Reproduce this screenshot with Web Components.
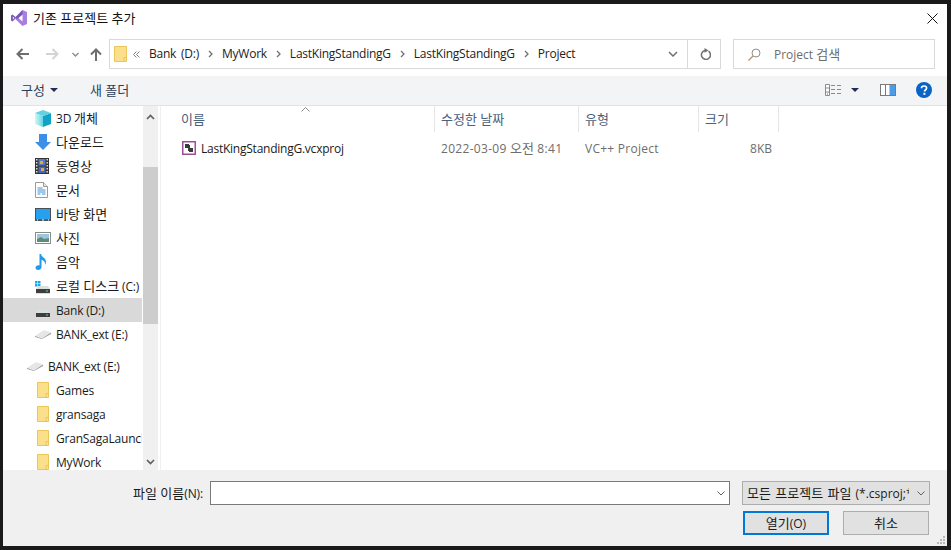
<!DOCTYPE html>
<html lang="ko">
<head>
<meta charset="utf-8">
<title>기존 프로젝트 추가</title>
<style>
html,body{margin:0;height:100%;overflow:hidden;background:#1a1a1a}
body{font:12px "Open Sans","Noto Sans CJK KR",sans-serif;color:#1a1a1a}
</style>
</head>
<body>
<file-dialog></file-dialog>
<script>
// hangul runs get a bigger size, the CJK font sets narrower than the original one
const ko = s => s.replace(/[가-힣]+( [가-힣]+)*/g, m => `<span style="font-size:13px;line-height:1;letter-spacing:0">${m}</span>`);
const folder = (w, h) => `<svg width="${w}" height="${h}" viewBox="0 0 ${w} ${h}"><path d="M.5.500h${w - 1}v${h - 1}H.5z" fill="#fcdf8a" stroke="#e8c65a"/><path d="M${w - 3} ${h - .5}v-4h2.500" fill="none" stroke="#e8c65a"/></svg>`;
const driveBody = `<path d="M3 8h10l2 3v5H1v-5z" fill="#dcdfe0"/><rect x="1" y="11" width="14" height="4" fill="#3e3e3e"/><rect x="11" y="12.500" width="2" height="1" fill="#5fe06a"/>`;
const ICONS = {
  folder: folder(12, 16),
  cube: `<svg width="16" height="17" viewBox="0 0 16 17"><defs><linearGradient id="c" x1="0" x2="1" y1="0" y2="0"><stop offset="0" stop-color="#d4f6f6"/><stop offset="1" stop-color="#62d6e0"/></linearGradient></defs><path d="M0 3l8 3v11l-8-3z" fill="url(#c)"/><path d="M8 6l8-3v11l-8 3z" fill="#12a2c8"/><path d="M8 0l8 3-8 3-8-3z" fill="#62d2e2"/></svg>`,
  download: `<svg width="16" height="16" viewBox="0 0 16 16"><path d="M4 0h8v8h4l-8 8-8-8h4z" fill="#3b8fe6"/></svg>`,
  video: `<svg width="14" height="16" viewBox="0 0 14 16"><rect width="14" height="16" fill="#333"/><path d="M1 1h1.500v1.500H1zm0 3h1.500v1.500H1zm0 3h1.500v1.500H1zm0 3h1.500v1.500H1zm0 3h1.500v1.500H1zm10.500-12H13v1.500h-1.500zm0 3H13v1.500h-1.500zm0 3H13v1.500h-1.500zm0 3H13v1.500h-1.500zm0 3H13v1.500h-1.500z" fill="#ddd"/><rect x="3.500" y="1" width="7" height="6.500" fill="#5a78c8"/><rect x="3.500" y="8.500" width="7" height="6.500" fill="#4a68b8"/><path d="M5 3h3v3H5zm1 7h3v3H6z" fill="#d8b040"/></svg>`,
  doc: `<svg width="13" height="16" viewBox="0 0 13 16"><path d="M.5.500h8l4 4v11H.5z" fill="#fff" stroke="#9a9a9a"/><path d="M8.500.500v4h4" fill="#e8e8e8" stroke="#9a9a9a"/><path d="M2.500 6h5M2.500 8h8M2.500 10h8M2.500 12h3M7 12h3.500" stroke="#3d8fd8"/></svg>`,
  desktop: `<svg width="16" height="13" viewBox="0 0 16 13"><rect width="16" height="13" fill="#4a4f55"/><rect x="1" y="1" width="14" height="10" fill="#27a0f0"/><path d="M1 11h14v1H1z" fill="#1d70c0"/><path d="M2 12h1M7 12h2M13 12h1" stroke="#fff"/></svg>`,
  photo: `<svg width="16" height="12" viewBox="0 0 16 12"><rect x=".5" y=".5" width="15" height="11" fill="#fff" stroke="#8a8a8a"/><rect x="2" y="2" width="12" height="8" fill="#9cc6dc"/><path d="M2 7l4-2 3 2 5-1v4H2z" fill="#5c8c78"/></svg>`,
  music: `<svg width="12" height="16" viewBox="0 0 12 16"><path d="M4.500 0H6c.3 3 5 3.500 5 8 0 1-.3 2-.8 2.800.2-3-2-4.500-3.700-5V13c0 1.700-1.500 3-3.300 3C1.700 16 .5 15 .5 13.700s1.500-2.400 3-2.400c.4 0 .7 0 1 .2z" fill="#1f9be8"/></svg>`,
  sysdrive: `<svg width="16" height="16" viewBox="0 0 16 16"><path d="M0 3h2.500v2.500H0zm3 0h2.500v2.500H3zM0 6h2.500v2.500H0zm3 0h2.500v2.500H3z" fill="#16a8f0"/>${driveBody}</svg>`,
  drive: `<svg width="16" height="16" viewBox="0 0 16 16">${driveBody}</svg>`,
  removable: `<svg width="16" height="9" viewBox="0 0 16 9"><path d="M0 6l9-6 7 2.500-9 6z" fill="#e6e6e6"/><path d="M0 6l7 2.500 9-6V4L7 9 0 7z" fill="#9a9a9a"/></svg>`,
  vcx: `<svg width="14" height="14" viewBox="0 0 14 14"><rect x=".75" y=".75" width="12.500" height="12.500" fill="#fff" stroke="#9b4f96" stroke-width="1.500"/><path d="M3 3h4v1h1v3h3v4H7v-1H6V7H3z" fill="#3a3a3a"/></svg>`,
  up: `<svg width="9" height="6" viewBox="0 0 9 6"><path d="M1 5l3.500-3.500L8 5" fill="none" stroke="#606060" stroke-width="1.700"/></svg>`,
  down: `<svg width="9" height="6" viewBox="0 0 9 6"><path d="M1 1l3.500 3.500L8 1" fill="none" stroke="#606060" stroke-width="1.700"/></svg>`,
  chev: `<svg width="8" height="5" viewBox="0 0 8 5"><path d="M.5.500L4 4 7.500.500" fill="none" stroke="#606060"/></svg>`
};

class FileDialog extends HTMLElement {
  connectedCallback() {
    this.attachShadow({ mode: 'open' });
    this.shadowRoot.innerHTML = `
      <style>
        :host{display:flex;flex-direction:column;box-sizing:border-box;width:944px;height:542px;margin:4px 4px 4px 3px;background:#fff;overflow:hidden}
        .main{display:flex;height:364px;flex:none}
      </style>
      <title-bar></title-bar>
      <nav-bar></nav-bar>
      <command-bar></command-bar>
      <div class="main">
        <nav-pane></nav-pane>
        <file-list></file-list>
      </div>
      <footer-bar></footer-bar>`;
  }
}

class TitleBar extends HTMLElement {
  connectedCallback() {
    this.attachShadow({ mode: 'open' });
    this.shadowRoot.innerHTML = `
      <style>
        :host{display:flex;align-items:center;height:29px;padding:0 9px 1px 8px;box-sizing:border-box;color:#111}
        svg.logo{margin-right:6px}
        span.t{flex:1}
      </style>
      <svg class="logo" width="16" height="16" viewBox="0 0 16 16"><path d="M0 5.500L1.500 4.500 5 7.500 4 9 1.500 11.500 0 10.500z" fill="#7a56b8"/><path d="M1.800 6.500L3.300 8 1.800 9.500z" fill="#fff"/><path d="M11.500 0L16 2v12l-4.500 2L4 8.800 5.500 7.500l6-7.500z" fill="#a77fe0"/><path d="M11.500 4.500L7.500 8l4 3.500z" fill="#fff"/><path d="M4 7.500L11.500 0v4.500L6 9z" fill="#7a56b8"/></svg>
      <span class="t">${ko('기존 프로젝트 추가')}</span>
      <svg width="11" height="11" viewBox="0 0 11 11"><path d="M.5.500l10 10M10.500.500l-10 10" stroke="#111" fill="none"/></svg>`;
  }
}

class NavBar extends HTMLElement {
  connectedCallback() {
    const crumbs = ['Bank (D:)', 'MyWork', 'LastKingStandingG', 'LastKingStandingG', 'Project'];
    const sep = `<svg class="sep" width="5" height="8" viewBox="0 0 5 8"><path d="M1 1l3 3-3 3" fill="none" stroke="#707070" stroke-width="1.300"/></svg>`;
    this.attachShadow({ mode: 'open' });
    this.shadowRoot.innerHTML = `
      <style>
        :host{display:flex;align-items:flex-start;height:43px;padding:6px 12px 0 0;box-sizing:border-box}
        .btns{display:flex;align-items:center;width:106px;height:30px;flex:none}
        .btns svg{flex:none}
        .addr{display:flex;align-items:center;width:612px;height:30px;box-sizing:border-box;border:1px solid #d9d9d9;flex:none;padding-left:4px}
        .path{flex:1;display:flex;align-items:center;min-width:0;white-space:nowrap;color:#222;letter-spacing:-.24px;word-spacing:2px}
        .path span{padding-bottom:1px}
        .path .sep{margin:0 9px}
        .drop{width:33px;height:28px;box-sizing:border-box;padding-left:4px;display:flex;align-items:center;justify-content:center;flex:none}
        .refresh{width:33px;height:28px;box-sizing:border-box;padding-left:2px;border-left:1px solid #d9d9d9;display:flex;align-items:center;justify-content:center;flex:none}
        .search{display:flex;align-items:center;width:202px;height:30px;margin-left:12px;box-sizing:border-box;border:1px solid #d9d9d9;padding-left:14px;color:#6d6d6d;flex:none}
        .search svg{margin-right:13px}
      </style>
      <div class="btns">
        <svg style="margin-left:13px" width="13" height="12" viewBox="0 0 13 12"><path d="M13 6H1.500M6.500 1l-5 5 5 5" fill="none" stroke="#6e6e6e" stroke-width="2"/></svg>
        <svg style="margin-left:17px" width="13" height="12" viewBox="0 0 13 12"><path d="M0 6h11.500M6.500 1l5 5-5 5" fill="none" stroke="#d4d4d4" stroke-width="2"/></svg>
        <svg style="margin-left:13px" width="7" height="5" viewBox="0 0 7 5"><path d="M.5 1l3 3 3-3" fill="none" stroke="#8a8a8a" stroke-width="1.300"/></svg>
        <svg style="margin-left:11px" width="12" height="13" viewBox="0 0 12 13"><path d="M6 13V1.500M1 6.500l5-5 5 5" fill="none" stroke="#6e6e6e" stroke-width="2"/></svg>
      </div>
      <div class="addr">
        <div class="path">
          ${folder(13, 16)}
          <svg width="7" height="7" viewBox="0 0 7 7" style="margin:0 9px 0 6px"><path d="M3.500 .5l-3 3 3 3M6.500 .5l-3 3 3 3" fill="none" stroke="#808080"/></svg>
          ${crumbs.map(c => `<span>${c}</span>`).join(sep)}
        </div>
        <div class="drop"><svg width="10" height="6" viewBox="0 0 10 6"><path d="M1 1l4 4 4-4" fill="none" stroke="#707070" stroke-width="1.500"/></svg></div>
        <div class="refresh"><svg width="11" height="12" viewBox="0 0 11 12"><path d="M8.500 3.200A4.500 4.500 0 1 1 5 2.500" fill="none" stroke="#707070" stroke-width="1.500"/><path d="M4.500 0l4 2.500-4 2.200z" fill="#707070"/></svg></div>
      </div>
      <div class="search">
        <svg width="13" height="13" viewBox="0 0 13 13"><circle cx="8" cy="5" r="4" fill="none" stroke="#909090"/><path d="M5 8l-4.500 4.500" stroke="#b8906a" stroke-width="1.200"/></svg>
        <span>${ko('Project 검색')}</span>
      </div>`;
  }
}

class CommandBar extends HTMLElement {
  connectedCallback() {
    this.attachShadow({ mode: 'open' });
    this.shadowRoot.innerHTML = `
      <style>
        :host{display:flex;align-items:center;height:30px;padding:0 15px 1px 18px;box-sizing:border-box;background:#f3f4f6;border-bottom:1px solid #e3e3e3;color:#2d3f58}
        .caret{width:0;height:0;border:4px solid transparent;border-top:4px solid #1e3050;border-bottom:0;margin-left:5px}
        .new{margin-left:32px}
        .grow{flex:1}
        .view{display:flex;align-items:center}
        .pane{margin-left:21px}
        .help{margin-left:20px}
      </style>
      <span>${ko('구성')}</span><i class="caret"></i>
      <span class="new">${ko('새 폴더')}</span>
      <div class="grow"></div>
      <div class="view">
        <svg width="16" height="12" viewBox="0 0 16 12"><path d="M.5.500h4v11h-4zM.5 4h4M.5 8h4" fill="#fff" stroke="#8a8a8a"/><path d="M6 1.500h4M6 5.500h4M6 9.500h4M12 1.500h4M12 5.500h4M12 9.500h4" stroke="#8a8a8a"/><rect x="2" y="9.500" width="1" height="1" fill="#d04040"/></svg>
        <i class="caret" style="margin-left:10px"></i>
      </div>
      <svg class="pane" width="16" height="12" viewBox="0 0 16 12"><rect x=".5" y=".5" width="15" height="11" fill="#fff" stroke="#7a7a7a"/><rect x="5" y="1" width="1" height="10" fill="#7a7a7a"/><rect x="9.500" y="1" width="5.500" height="10" fill="#4a9be8"/></svg>
      <svg class="help" width="16" height="16" viewBox="0 0 16 16"><circle cx="8" cy="8" r="8" fill="#0a63c4"/><path d="M5.500 6.200C5.500 4.800 6.600 4 8 4s2.600.8 2.600 2.100c0 1.900-2.100 1.800-2.100 3.400" fill="none" stroke="#fff" stroke-width="1.700"/><rect x="7.400" y="10.800" width="2" height="2" fill="#fff"/></svg>`;
  }
}

class NavItem extends HTMLElement {
  connectedCallback() {
    const icon = this.getAttribute('icon');
    const indent = this.getAttribute('indent') || 32;
    const text = this.getAttribute('text') || 21;
    this.attachShadow({ mode: 'open' });
    this.shadowRoot.innerHTML = `
      <style>
        :host{display:flex;align-items:center;height:24px;flex:none;white-space:nowrap;overflow:hidden;color:#1a1a1a;letter-spacing:-.2px}
        :host([selected]){background:#d9d9d9}
        .ic{display:flex;align-items:center;flex:none;margin-left:${indent}px;width:${text}px}
      </style>
      <div class="ic">${ICONS[icon]}</div>
      <span><slot></slot></span>`;
  }
}

class NavPane extends HTMLElement {
  connectedCallback() {
    this.attachShadow({ mode: 'open' });
    this.shadowRoot.innerHTML = `
      <style>
        :host{display:flex;width:157px;height:364px;flex:none;overflow:hidden}
        .list{width:139px;flex:none;display:flex;flex-direction:column;overflow:hidden}
        .gap{height:8px;flex:none}
        .bar{width:15px;margin-left:1px;background:#f0f0f0;position:relative;display:flex;flex-direction:column;justify-content:space-between;align-items:center;padding:8px 0 5px;box-sizing:border-box}
        .thumb{position:absolute;left:0;right:0;top:61px;height:157px;background:#cdcdcd}
      </style>
      <div class="list">
        <nav-item icon="cube">${ko('3D 개체')}</nav-item>
        <nav-item icon="download">${ko('다운로드')}</nav-item>
        <nav-item icon="video">${ko('동영상')}</nav-item>
        <nav-item icon="doc">${ko('문서')}</nav-item>
        <nav-item icon="desktop">${ko('바탕 화면')}</nav-item>
        <nav-item icon="photo">${ko('사진')}</nav-item>
        <nav-item icon="music">${ko('음악')}</nav-item>
        <nav-item icon="sysdrive">${ko('로컬 디스크 (C:)')}</nav-item>
        <nav-item icon="drive" selected>Bank (D:)</nav-item>
        <nav-item icon="removable">BANK_ext (E:)</nav-item>
        <div class="gap"></div>
        <nav-item icon="removable" indent="24">BANK_ext (E:)</nav-item>
        <nav-item icon="folder" indent="34" text="19">Games</nav-item>
        <nav-item icon="folder" indent="34" text="19">gransaga</nav-item>
        <nav-item icon="folder" indent="34" text="19">GranSagaLauncher</nav-item>
        <nav-item icon="folder" indent="34" text="19">MyWork</nav-item>
      </div>
      <div class="bar">
        ${ICONS.up}
        <div class="thumb"></div>
        ${ICONS.down}
      </div>`;
  }
}

class FileRow extends HTMLElement {
  connectedCallback() {
    this.attachShadow({ mode: 'open' });
    this.shadowRoot.innerHTML = `
      <style>
        :host{display:grid;grid-template-columns:274px 144px 120px 73px;height:22px;margin-top:5px;align-items:center;color:#6d6d6d}
        div{padding-left:6px;white-space:nowrap}
        .name{display:flex;align-items:center;color:#1a1a1a;padding-left:21px;letter-spacing:-.24px}
        .name svg{margin-right:5px}
        .date{letter-spacing:.3px}
        .type{letter-spacing:.25px}
        .size{text-align:right;padding:0}
      </style>
      <div class="name">${ICONS[this.getAttribute('icon')]}<span>${this.getAttribute('name')}</span></div>
      <div class="date">${ko(this.getAttribute('date'))}</div>
      <div class="type">${this.getAttribute('type')}</div>
      <div class="size">${this.getAttribute('size')}</div>`;
  }
}

class FileList extends HTMLElement {
  connectedCallback() {
    this.attachShadow({ mode: 'open' });
    this.shadowRoot.innerHTML = `
      <style>
        :host{display:block;flex:1;border-left:1px solid #f0f0f0;position:relative}
        .cols{display:grid;grid-template-columns:274px 144px 120px 80px;height:26px;color:#4c607a}
        .cols div{border-right:1px solid #e5e5e5;padding-left:6px;display:flex;align-items:center;box-sizing:border-box;height:26px}
        .cols div:first-child{padding-left:20px}
        .sort{position:absolute;left:140px;top:1px}
      </style>
      <div class="cols"><div>${ko('이름')}</div><div>${ko('수정한 날짜')}</div><div>${ko('유형')}</div><div>${ko('크기')}</div></div>
      <svg class="sort" width="9" height="5" viewBox="0 0 9 5"><path d="M.5 4.500l4-4 4 4" fill="none" stroke="#8a8a8a"/></svg>
      <file-row icon="vcx" name="LastKingStandingG.vcxproj" date="2022-03-09 오전 8:41" type="VC++ Project" size="8KB"></file-row>`;
  }
}

class FooterBar extends HTMLElement {
  connectedCallback() {
    this.attachShadow({ mode: 'open' });
    this.shadowRoot.innerHTML = `
      <style>
        :host{display:block;flex:1;background:#f0f0f0;position:relative;padding:11px 0 0 0;box-sizing:border-box;color:#1a1a1a}
        .row{display:flex;align-items:center;height:24px}
        .label{margin-left:130px;width:77px;white-space:nowrap;letter-spacing:-.1px}
        .input{width:520px;height:24px;box-sizing:border-box;border:1px solid #7a7a7a;background:#fff;display:flex;align-items:center;justify-content:flex-end;padding-right:4px}
        .type{width:188px;height:24px;margin-left:12px;box-sizing:border-box;border:1px solid #adadad;background:#e1e1e1;display:flex;align-items:center;padding:0 4px 0 4px;white-space:nowrap}
        .type span{flex:1;overflow:hidden;word-spacing:1px}
        .type svg{flex:none;margin-left:8px}
        .btns{display:flex;height:24px;margin-top:6px;padding-left:740px}
        dlg-button+dlg-button{margin-left:14px}
        .grip{position:absolute;right:2px;bottom:2px}
      </style>
      <div class="row">
        <span class="label">${ko('파일 이름')}(N):</span>
        <div class="input">${ICONS.chev}</div>
        <div class="type"><span>${ko('모든 프로젝트 파일')} (*.csproj;*.vbproj)</span>${ICONS.chev}</div>
      </div>
      <div class="btns">
        <dlg-button primary>${ko('열기')}(O)</dlg-button>
        <dlg-button>${ko('취소')}</dlg-button>
      </div>
      <svg class="grip" width="8" height="8" viewBox="0 0 8 8"><path d="M6 0h2v2H6zM3 3h2v2H3zm3 0h2v2H6zM0 6h2v2H0zm3 0h2v2H3zm3 0h2v2H6z" fill="#b8b8b8"/></svg>`;
  }
}

class DlgButton extends HTMLElement {
  connectedCallback() {
    this.attachShadow({ mode: 'open' });
    this.shadowRoot.innerHTML = `
      <style>
        :host{display:flex;align-items:center;justify-content:center;width:86px;height:24px;box-sizing:border-box;border:1px solid #adadad;background:#e1e1e1}
        :host([primary]){border:2px solid #0078d7}
        span{white-space:nowrap}
      </style>
      <span><slot></slot></span>`;
  }
}

customElements.define('nav-item', NavItem);
customElements.define('dlg-button', DlgButton);
customElements.define('title-bar', TitleBar);
customElements.define('nav-bar', NavBar);
customElements.define('command-bar', CommandBar);
customElements.define('nav-pane', NavPane);
customElements.define('file-row', FileRow);
customElements.define('file-list', FileList);
customElements.define('footer-bar', FooterBar);
customElements.define('file-dialog', FileDialog);
</script>
</body>
</html>
